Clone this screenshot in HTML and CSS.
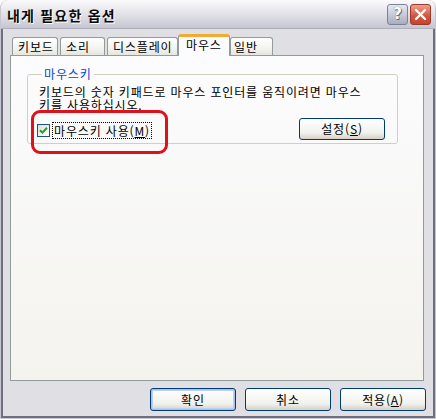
FILE: index.html
```html
<!DOCTYPE html>
<html lang="ko">
<head>
<meta charset="utf-8">
<title>내게 필요한 옵션</title>
<link rel="stylesheet" href="styles.css">
</head>
<body>
<div class="window">
  <div class="titlebar">
    <span class="title">내게 필요한 옵션</span>
    <div class="tb-buttons">
      <span class="tb-btn help">?</span>
      <span class="tb-btn close">
        <svg width="13" height="13" viewBox="0 0 13 13"><path d="M2 2 L11 11 M11 2 L2 11" stroke="#fff" stroke-width="2.4" stroke-linecap="round"/></svg>
      </span>
    </div>
  </div>
  <div class="client">
    <div class="tabs">
      <div class="tab t1">키보드</div>
      <div class="tab t2">소리</div>
      <div class="tab t3">디스플레이</div>
      <div class="tab t4 active">마우스</div>
      <div class="tab t5">일반</div>
    </div>
    <div class="panel">
      <fieldset class="group">
        <legend>마우스키</legend>
        <p class="desc">키보드의 숫자 키패드로 마우스 포인터를 움직이려면 마우스<br>키를 사용하십시오.</p>
        <div class="row">
          <label class="check">
            <span class="box"><svg width="9" height="9" viewBox="0 0 9 9"><path d="M1 4.2 L3.4 6.6 L8 1.8" fill="none" stroke="#21a121" stroke-width="2"/></svg></span>
            <span class="focus">마우스키 사용(<u>M</u>)</span>
          </label>
          <span class="btn">설정(<u>S</u>)</span>
        </div>
      </fieldset>
      <div class="annot"></div>
    </div>
    <div class="footer">
      <span class="btn default">확인</span>
      <span class="btn">취소</span>
      <span class="btn">적용(<u>A</u>)</span>
    </div>
  </div>
</div>
</body>
</html>
```

FILE: styles.css
```css
html, body {
  margin: 0;
  padding: 0;
  background: #ffffff;
}
body {
  font-family: "Noto Sans CJK KR", "Noto Sans", sans-serif;
  font-size: 12px;
  letter-spacing: 0.85px;
  color: #000;
}
.window {
  width: 436px;
  height: 419px;
  box-sizing: border-box;
  display: flex;
  flex-direction: column;
  background: #e0dfe3;
  border-radius: 8px 8px 0 0;
  border: 1px solid #c6c6d0;
  border-top: none;
  overflow: hidden;
}
.titlebar {
  height: 29px;
  flex: none;
  display: flex;
  align-items: center;
  justify-content: space-between;
  padding: 0 4px 0 6px;
  background: linear-gradient(#fbfbfd 0%, #eeeef2 25%, #dcdce3 60%, #c6c6d1 100%);
  border-bottom: 1px solid #b0b0bc;
  box-sizing: border-box;
  border-radius: 7px 7px 0 0;
}
.title {
  font-weight: bold;
  font-size: 14px;
  color: #0a0a0a;
  letter-spacing: 1.2px;
  text-shadow: 1px 1px 0 #ffffff;
  margin-top: 1px;
}
.tb-buttons {
  display: flex;
  gap: 2px;
}
.tb-btn {
  width: 21px;
  height: 21px;
  box-sizing: border-box;
  border-radius: 3px;
  display: flex;
  align-items: center;
  justify-content: center;
  letter-spacing: 0;
}
.help {
  background: linear-gradient(#e6e8f0, #a9adbf);
  border: 1px solid #7d8195;
  color: #fff;
  font-family: "DejaVu Sans", sans-serif;
  font-weight: bold;
  font-size: 15px;
  text-shadow: 0 0 1px #5c6078, 1px 1px 0 #6a6e86;
}
.close {
  background: linear-gradient(#f0a08c, #d2533c 60%, #c6452f);
  border: 1px solid #9a3a2c;
}
.client {
  flex: 1;
  display: flex;
  flex-direction: column;
  padding: 5px 9px 0 7px;
  border-left: 2px solid #6f6f7f;
  border-right: 2px solid #6f6f7f;
  border-bottom: 2px solid #6f6f7f;
}
.tabs {
  display: flex;
  align-items: flex-end;
  height: 21px;
  padding-left: 2px;
  position: relative;
  z-index: 2;
}
.tab {
  height: 18px;
  box-sizing: border-box;
  border: 1px solid #919b9c;
  border-bottom: none;
  border-radius: 3px 3px 0 0;
  background: linear-gradient(#ffffff, #f3f3ef 60%, #e6e6e0);
  padding: 1px 0 0 5px;
  line-height: 15px;
  white-space: nowrap;
}
.t1 { width: 46px; }
.t2 { width: 45px; margin-left: 2px; }
.t3 { width: 71px; margin-left: 2px; }
.t4 { width: 52px; }
.t5 { width: 43px; padding-left: 3px; }
.tab.active {
  height: 22px;
  margin-bottom: -1px;
  background: #fcfcfe;
  border-top: 3px solid #f2b63c;
  border-color: #919b9c;
  border-top-color: #f0ab35;
  padding: 0 0 0 7px;
  line-height: 16px;
}
.panel {
  position: relative;
  height: 326px;
  box-sizing: border-box;
  border: 1px solid #919b9c;
  background: linear-gradient(#fcfcfe, #f4f3ee);
  padding: 12px 25px 0 16px;
}
.group {
  margin: 0;
  padding: 0 12px 8px 9px;
  border: 1px solid #d0d0bf;
  border-radius: 3px;
  height: 76px;
  box-sizing: border-box;
}
.group legend {
  color: #0046d5;
  padding: 0 2px;
  margin-left: 5px;
  line-height: 12px;
}
.desc {
  margin: 5px 0 0 2px;
  line-height: 13px;
  white-space: nowrap;
}
.row {
  display: flex;
  align-items: center;
  justify-content: space-between;
  margin-top: 7px;
}
.check {
  display: flex;
  align-items: center;
  gap: 3px;
  margin-top: 3px;
}
.box {
  width: 13px;
  height: 13px;
  box-sizing: border-box;
  border: 1px solid #1c5180;
  background: linear-gradient(135deg, #dcdcd7, #ffffff);
  display: flex;
  align-items: center;
  justify-content: center;
}
.focus {
  outline: 1px dotted #000;
  outline-offset: 0;
  padding: 0 1px;
  line-height: 15px;
}
.btn {
  width: 86px;
  height: 22px;
  box-sizing: border-box;
  border: 1px solid #003c74;
  border-radius: 3px;
  background: linear-gradient(#ffffff, #f1f1ed 70%, #d6d0c5);
  display: flex;
  align-items: center;
  justify-content: center;
  line-height: 14px;
}
.annot {
  position: absolute;
  left: 20px;
  top: 54px;
  width: 137px;
  height: 44px;
  box-sizing: border-box;
  border: 3px solid #e0101a;
  border-radius: 9px;
}
.footer {
  display: flex;
  justify-content: flex-end;
  gap: 9px;
  margin-top: 7px;
  margin-right: -2px;
}
.footer .btn {
  height: 23px;
}
.footer .btn.default {
  box-shadow: inset 0 0 0 1px #a8c0ec, inset 0 0 0 2px #bccfef;
}
```
